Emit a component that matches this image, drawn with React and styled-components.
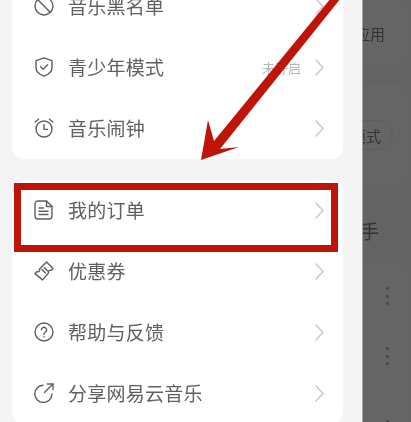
import React from "react";
import styled, { createGlobalStyle } from "styled-components";

const Global = createGlobalStyle`
  html, body { margin: 0; padding: 0; background: #636363; }
  body { font-family: "Noto Sans CJK SC", "Noto Sans", sans-serif; }
`;

const Page = styled.div`
  position: relative;
  display: flex;
  width: 411px;
  height: 422px;
  overflow: hidden;
  background: #636363;
`;

const Drawer = styled.div`
  flex: 0 0 363px;
  box-sizing: border-box;
  padding: 0 19px 0 12px;
  background: #f4f4f5;
  border-right: 1px solid #a3a3a3;
  display: flex;
  flex-direction: column;
  gap: 21px;
`;

const Card = styled.div`
  flex: none;
  background: #fff;
  border-radius: 12px;
  &:first-child { margin-top: -24px; }
`;

const Row = styled.div`
  height: 61px;
  display: flex;
  align-items: center;
  padding: 0 19px 0 22px;
  color: #606060;
  filter: blur(0.35px);
`;

const IconBox = styled.svg`
  flex: none;
  width: 20px;
  height: 20px;
  margin-right: 14px;
  margin-top: -1px;
  fill: none;
  stroke: #5f5f5f;
  stroke-width: 1.4;
  stroke-linecap: round;
  stroke-linejoin: round;
`;

const Label = styled.span`
  flex: 1;
  font-size: 19px;
  letter-spacing: 0.25px;
  line-height: 24px;
  margin-top: -1px;
`;

const Hint = styled.span`
  font-size: 13px;
  color: #b6b6b6;
  margin-right: 14px;
  margin-top: -1px;
`;

const Chevron = styled.svg`
  flex: none;
  width: 9px;
  height: 17px;
  margin-top: -1px;
  fill: none;
  stroke: #c9c9c9;
  stroke-width: 1.5;
  stroke-linecap: round;
  stroke-linejoin: round;
`;

const Side = styled.div`
  flex: 1;
  min-width: 0;
  overflow: hidden;
  display: flex;
  flex-direction: column;
`;

const SideCard = styled.div`
  flex: none;
  height: ${(p) => p.$h}px;
  margin-bottom: ${(p) => p.$mb || 0}px;
  margin-right: 2px;
  box-sizing: border-box;
  padding-top: ${(p) => p.$pt}px;
  background: #656565;
  border-radius: 0 12px 12px 0;
`;

const SideTitle = styled.div`
  flex: none;
  height: 79px;
  box-sizing: border-box;
  padding-top: 36px;
  margin-left: -3px;
  color: #333;
  font-size: 19px;
  line-height: 20px;
  white-space: nowrap;
  filter: blur(0.3px);
`;

const SideLabel = styled.div`
  margin-left: -8px;
  height: 20px;
  line-height: 20px;
  font-size: 15px;
  color: #333;
  white-space: nowrap;
  filter: blur(0.3px);
`;

const Pill = styled.div`
  display: inline-flex;
  align-items: center;
  box-sizing: border-box;
  margin-left: -23px;
  height: 30px;
  padding: 0 11px 0 10px;
  border-radius: 15px;
  border: 1px solid #5d5d5d;
  font-size: 15px;
  color: #333;
  white-space: nowrap;
  filter: blur(0.3px);
`;

const Dots = styled.div`
  height: ${(p) => p.$h}px;
  display: flex;
  flex-direction: column;
  gap: 4.5px;
  padding-left: 23px;
`;

const Dot = styled.i`
  flex: none;
  width: 3px;
  height: 3px;
  border-radius: 50%;
  background: #484848;
`;

const Overlay = styled.svg`
  position: absolute;
  left: 0;
  top: 0;
  width: 411px;
  height: 422px;
  pointer-events: none;
`;

const Highlight = styled.div`
  position: absolute;
  left: 14px;
  top: 183px;
  width: 324px;
  height: 69px;
  box-sizing: border-box;
  border: 7.5px solid #bf1508;
  pointer-events: none;
`;

const Ban = () => (
  <IconBox viewBox="0 0 20 20">
    <circle cx="10" cy="10" r="9" />
    <path d="M3.8 3.8 16.2 16.2" />
  </IconBox>
);
const Shield = () => (
  <IconBox viewBox="0 0 20 20">
    <path d="M10 .8 18 3.6v7.2c0 3.8-3.2 6.6-8 8.4-4.8-1.8-8-4.6-8-8.4V3.6Z" />
    <path d="M6.6 9.8 9.2 12.2 13.6 7.8" />
  </IconBox>
);
const Alarm = () => (
  <IconBox viewBox="0 0 20 20">
    <circle cx="10" cy="11" r="8" />
    <path d="M10 6.6V11.4H13.6" />
    <path d="M1.2 4 4.6 1.2M18.8 4 15.4 1.2" />
  </IconBox>
);
const Doc = () => (
  <IconBox viewBox="0 0 20 20">
    <path d="M4 1h8.5L18 6.5V16a3 3 0 0 1-3 3H4a3 3 0 0 1-3-3V4a3 3 0 0 1 3-3Z" />
    <path d="M12.5 1.2V6.5H18" />
    <path d="M5 8h4.5M5 11.2h9M5 14.5h9" />
  </IconBox>
);
const Ticket = () => (
  <IconBox viewBox="0 0 20 20">
    <path d="M12.6 1 19 7.4l-2 2a1.9 1.9 0 0 0-2.5 2.6l-5.9 6.9L1 12.6l2-2a1.9 1.9 0 0 0 2.5-2.6Z" />
    <path d="M8 8.6l3.4 3.4M10.4 6.8l3 3" />
  </IconBox>
);
const Help = () => (
  <IconBox viewBox="0 0 20 20">
    <circle cx="10" cy="10" r="9" />
    <path d="M7.4 7.8a2.6 2.6 0 1 1 4 2.2c-.9.6-1.4 1-1.4 2.2" />
    <path d="M10 14.8v.2" />
  </IconBox>
);
const Share = () => (
  <IconBox viewBox="0 0 20 20">
    <path d="M9 2.2A8.6 8.6 0 1 0 18 11" />
    <path d="M13.4 1H19V6.6" />
    <path d="M19 1 10.4 9.6" />
  </IconBox>
);

const Arrow = () => (
  <Chevron viewBox="0 0 9 17">
    <path d="M1 1 8 8.5 1 16" />
  </Chevron>
);

const Item = ({ icon, label, hint }) => (
  <Row>
    {icon}
    <Label>{label}</Label>
    {hint && <Hint>{hint}</Hint>}
    <Arrow />
  </Row>
);

export default function App() {
  return (
    <>
      <Global />
      <Page>
        <Drawer>
          <Card>
            <Item icon={<Ban />} label="音乐黑名单" />
            <Item icon={<Shield />} label="青少年模式" hint="未开启" />
            <Item icon={<Alarm />} label="音乐闹钟" />
          </Card>
          <Card>
            <Item icon={<Doc />} label="我的订单" />
            <Item icon={<Ticket />} label="优惠券" />
            <Item icon={<Help />} label="帮助与反馈" />
            <Item icon={<Share />} label="分享网易云音乐" />
          </Card>
        </Drawer>
        <Side>
          <SideCard $h={65} $mb={20} $pt={24}>
            <SideLabel>应用</SideLabel>
          </SideCard>
          <SideCard $h={100} $pt={35}>
            <Pill>模式</Pill>
          </SideCard>
          <SideTitle>手</SideTitle>
          <SideCard $h={170} $pt={23}>
            <Dots $h={60}><Dot /><Dot /><Dot /></Dots>
            <Dots $h={73}><Dot /><Dot /><Dot /></Dots>
            <Dots $h={3}><Dot /></Dots>
          </SideCard>
        </Side>
        <Highlight />
        <Overlay viewBox="0 0 411 422">
          <polygon points="201,160 208,120 214,141 331,-2 341,-2 220,149 239,147" fill="#bf1508" />
        </Overlay>
      </Page>
    </>
  );
}
